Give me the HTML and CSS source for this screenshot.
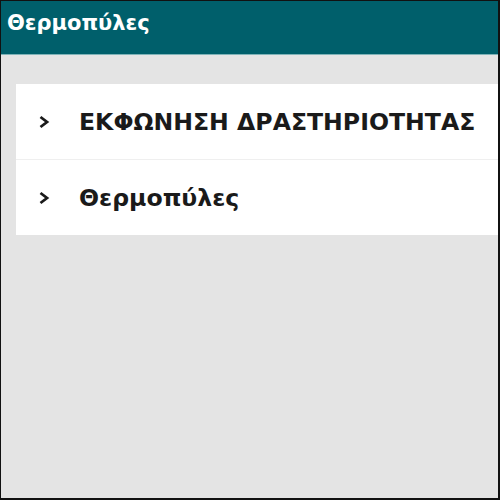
FILE: index.html
```html
<!DOCTYPE html>
<html lang="el">
<head>
    <meta charset="UTF-8">
    <meta name="viewport" content="width=device-width, initial-scale=1.0">
    <title>Θερμοπύλες</title>
    <link rel="stylesheet" href="styles.css">
</head>
<body>
    <div class="frame">
        <header class="topbar">
            <h1>Θερμοπύλες</h1>
        </header>
        <main class="content">
            <div class="accordion">
                <div class="acc-row">
                    <span class="chevron">
                        <svg width="12" height="14" viewBox="0 0 12 14"><path d="M2.5 2 L9 7 L2.5 12" fill="none" stroke="#1a1a1a" stroke-width="2.8"/></svg>
                    </span>
                    <span class="acc-title">ΕΚΦΩΝΗΣΗ ΔΡΑΣΤΗΡΙΟΤΗΤΑΣ</span>
                </div>
                <div class="acc-row">
                    <span class="chevron">
                        <svg width="12" height="14" viewBox="0 0 12 14"><path d="M2.5 2 L9 7 L2.5 12" fill="none" stroke="#1a1a1a" stroke-width="2.8"/></svg>
                    </span>
                    <span class="acc-title">Θερμοπύλες</span>
                </div>
            </div>
        </main>
    </div>
</body>
</html>
```

FILE: styles.css
```css
body {
    margin: 0;
    padding: 0;
    font-family: 'DejaVu Sans', Verdana, sans-serif;
}

.frame {
    width: 500px;
    height: 500px;
    box-sizing: border-box;
    border-style: solid;
    border-color: #111;
    border-width: 1px 2px 2px 1px;
    background: #e4e4e4;
    display: flex;
    flex-direction: column;
    overflow: hidden;
}

.topbar {
    background: #005f6b;
    height: 53px;
    border-bottom: 1px solid #7fb3b8;
    padding: 0 6px;
    display: flex;
    align-items: flex-start;
}

.topbar h1 {
    margin: 10px 0 0;
    font-size: 21px;
    font-weight: bold;
    color: #ffffff;
}

.content {
    padding: 29px 0 0 15px;
}

.accordion {
    background: #ffffff;
}

.acc-row {
    height: 75px;
    display: flex;
    align-items: center;
    padding-left: 22px;
}

.acc-row + .acc-row {
    border-top: 1px solid #efefef;
}

.chevron {
    width: 41px;
    display: flex;
    align-items: center;
}

.acc-title {
    font-size: 23.6px;
    font-weight: bold;
    color: #1a1a1a;
}
```
